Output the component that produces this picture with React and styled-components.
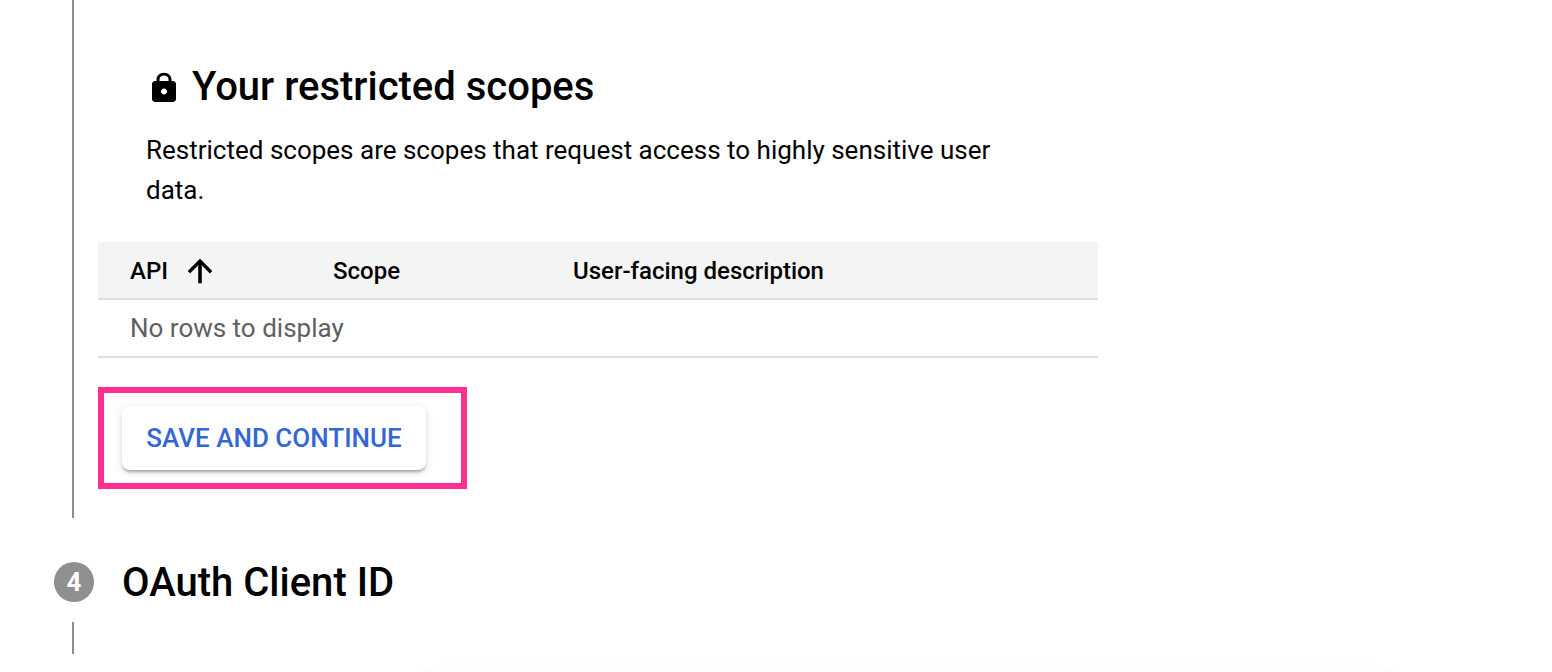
import React from 'react';
import styled, { createGlobalStyle } from 'styled-components';

const GlobalStyle = createGlobalStyle`
  html, body {
    margin: 0;
    padding: 0;
    height: 672px;
    overflow: hidden;
    background: #fff;
    font-family: Roboto, "Liberation Sans", sans-serif;
    color: #000;
  }
`;

const StepBody = styled.section`
  box-sizing: border-box;
  margin-left: 72px;
  height: ${(p) => p.$height}px;
  padding-left: 24px;
  border-left: 2px solid #8f8f8f;
`;

const Content = styled.div`
  width: 1000px;
  padding-top: 65px;
`;

const Intro = styled.div`
  padding-left: 48px;
  width: 860px;
`;

const Heading = styled.h2`
  display: flex;
  align-items: center;
  gap: 10px;
  margin: 0 0 21px 0;
  height: 44px;
  font-size: 40px;
  font-weight: 500;
  line-height: 44px;
  svg {
    flex: none;
  }
`;

const Description = styled.p`
  margin: 0;
  font-size: 26px;
  line-height: 40px;
`;

const Table = styled.div`
  margin-top: 32px;
`;

const Row = styled.div`
  box-sizing: border-box;
  display: grid;
  grid-template-columns: 203px 240px 1fr;
  align-items: center;
  height: ${(p) => p.$height}px;
  padding-left: 32px;
  background: ${(p) => (p.$head ? '#f4f4f4' : '#fff')};
  border-bottom: 2px solid #dedede;
`;

const HeadCell = styled.div`
  display: flex;
  align-items: center;
  gap: 14px;
  padding-top: 2px;
  font-size: 24px;
  font-weight: 500;
  svg {
    flex: none;
  }
`;

const EmptyText = styled.div`
  grid-column: 1 / -1;
  font-size: 26px;
  color: #5f5f5f;
`;

const Highlight = styled.div`
  box-sizing: border-box;
  width: 369px;
  height: 102px;
  margin-top: 29px;
  padding: 13px 0 0 18px;
  border: 6px solid #ff2f92;
`;

const Button = styled.button`
  display: block;
  width: 304px;
  height: 64px;
  padding: 0;
  border: 0;
  border-radius: 8px;
  background: #fff;
  box-shadow: 0 3px 3px -1px rgba(0, 0, 0, 0.3), 0 2px 8px 1px rgba(0, 0, 0, 0.1);
  font-family: inherit;
  font-size: 26px;
  font-weight: 500;
  color: #3367d6;
`;

const StepHeader = styled.div`
  display: flex;
  align-items: center;
  gap: 28px;
  margin: 44px 0 20px 54px;
  height: 40px;
`;

const StepNumber = styled.div`
  display: flex;
  align-items: center;
  justify-content: center;
  width: 40px;
  height: 40px;
  border-radius: 50%;
  background: #8f8f8f;
  color: #fff;
  font-size: 26px;
  font-weight: 700;
`;

const StepTitle = styled.h2`
  margin: 0;
  font-size: 40px;
  font-weight: 500;
`;

// faint top of the next card's shadow, cut off by the window
const GhostCard = styled.div`
  width: 980px;
  height: 15px;
  margin: 3px 0 0 416px;
  background: linear-gradient(#fff, #fcfcfc);
  clip-path: polygon(35px 0, calc(100% - 35px) 0, 100% 100%, 0 100%);
`;

const LockIcon = () => (
  <svg width="36" height="36" viewBox="0 0 24 24" fill="currentColor">
    <path
      fillRule="evenodd"
      d="M18 8h-1V7c0-2.6-2.2-4.5-5-4.5S7 4.4 7 7v1H6c-1.1 0-2 .9-2 2v10c0 1.1.9 2 2 2h12c1.1 0 2-.9 2-2V10c0-1.1-.9-2-2-2zm-6 9c-1.1 0-2-.9-2-2s.9-2 2-2 2 .9 2 2-.9 2-2 2zm3-9H9V7c0-1.66 1.34-2.7 3-2.7s3 1.04 3 2.7v1z"
    />
  </svg>
);

const SortIcon = () => (
  <svg width="36" height="36" viewBox="0 0 24 24" fill="currentColor" stroke="currentColor" strokeWidth="0.4">
    <path d="M4 12l1.41 1.41L11 7.83V20h2V7.83l5.58 5.59L20 12l-8-8-8 8z" />
  </svg>
);

export default function App() {
  return (
    <>
      <GlobalStyle />
      <StepBody $height={518}>
        <Content>
          <Intro>
            <Heading>
              <LockIcon />
              Your restricted scopes
            </Heading>
            <Description>
              Restricted scopes are scopes that request access to highly sensitive user data.
            </Description>
          </Intro>
          <Table>
            <Row $head $height={58}>
              <HeadCell>
                API
                <SortIcon />
              </HeadCell>
              <HeadCell>Scope</HeadCell>
              <HeadCell>User-facing description</HeadCell>
            </Row>
            <Row $height={58}>
              <EmptyText>No rows to display</EmptyText>
            </Row>
          </Table>
          <Highlight>
            <Button>SAVE AND CONTINUE</Button>
          </Highlight>
        </Content>
      </StepBody>
      <StepHeader>
        <StepNumber>4</StepNumber>
        <StepTitle>OAuth Client ID</StepTitle>
      </StepHeader>
      <StepBody $height={32} />
      <GhostCard />
    </>
  );
}
